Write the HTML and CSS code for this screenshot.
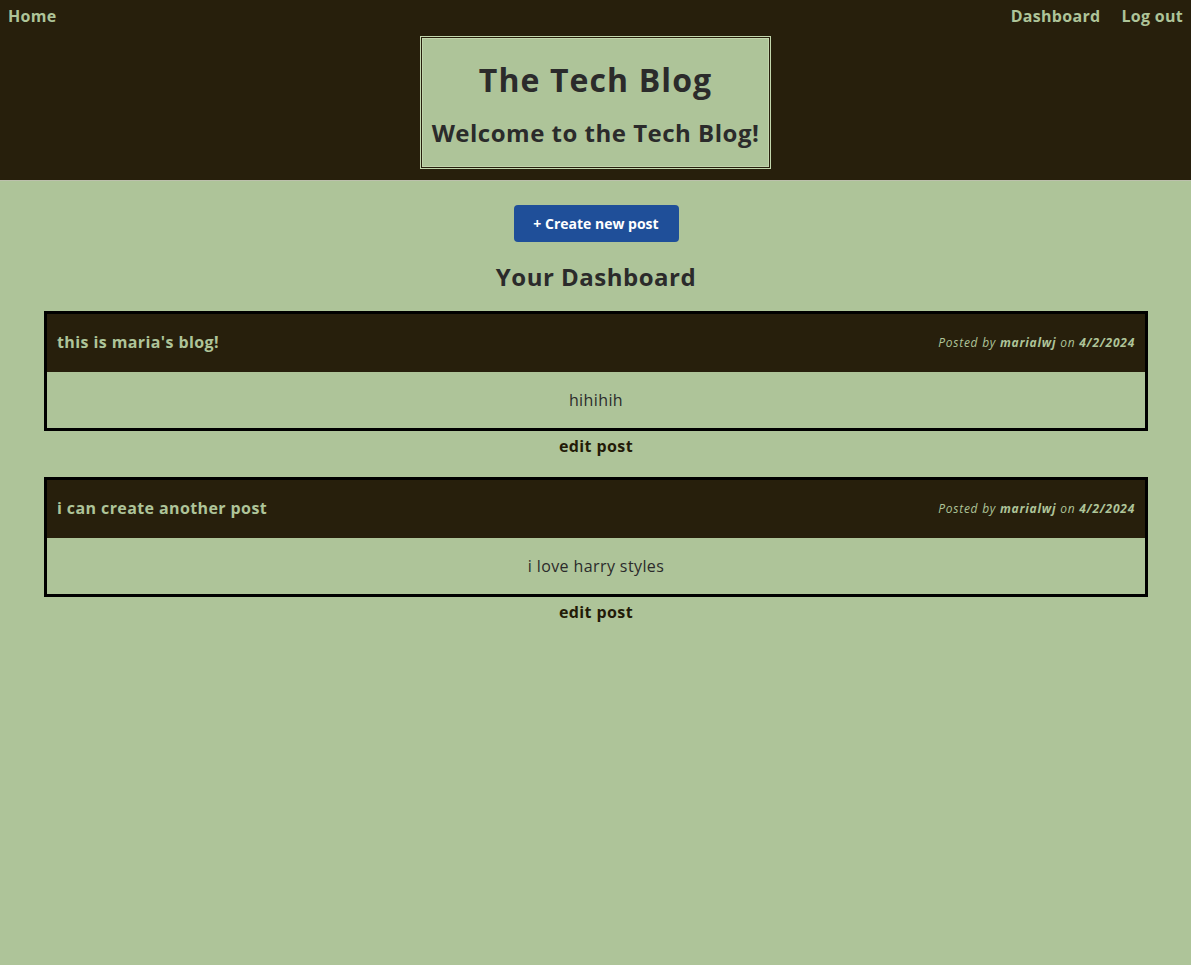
FILE: index.html
```html
<!DOCTYPE html>
<html lang="en">
<head>
<meta charset="utf-8">
<title>The Tech Blog</title>
<link rel="stylesheet" href="styles.css">
</head>
<body>
<header class="site-header">
  <nav class="nav">
    <a class="nav-link" href="#">Home</a>
    <div class="nav-right">
      <a class="nav-link" href="#">Dashboard</a>
      <a class="nav-link" href="#">Log out</a>
    </div>
  </nav>
  <div class="title-box">
    <h1 class="site-title">The Tech Blog</h1>
    <h2 class="site-subtitle">Welcome to the Tech Blog!</h2>
  </div>
</header>
<main class="main">
  <button class="btn-create">+ Create new post</button>
  <h2 class="page-title">Your Dashboard</h2>
  <section class="post">
    <div class="post-card">
      <div class="post-head">
        <span class="post-title">this is maria's blog!</span>
        <span class="post-meta">Posted by <b>marialwj</b> on <b>4/2/2024</b></span>
      </div>
      <div class="post-body">hihihih</div>
    </div>
    <a class="edit-link" href="#">edit post</a>
  </section>
  <section class="post">
    <div class="post-card">
      <div class="post-head">
        <span class="post-title">i can create another post</span>
        <span class="post-meta">Posted by <b>marialwj</b> on <b>4/2/2024</b></span>
      </div>
      <div class="post-body">i love harry styles</div>
    </div>
    <a class="edit-link" href="#">edit post</a>
  </section>
</main>
</body>
</html>
```
FILE: styles.css
```css
* { box-sizing: border-box; }
html, body {
  margin: 0;
  padding: 0;
  background: #aec499;
  font-family: "Open Sans", "DejaVu Sans", sans-serif;
  color: #2b2b2b;
  letter-spacing: 0.4px;
}
a { text-decoration: none; }

.site-header {
  background: #271f0c;
  border-bottom: 1px solid #bcc0ac;
  padding-bottom: 11px;
}
.nav {
  display: flex;
  justify-content: space-between;
  align-items: center;
  height: 32px;
  padding: 0 8px;
}
.nav-right {
  display: flex;
  gap: 21px;
}
.nav-link {
  color: #aec499;
  font-weight: 700;
  font-size: 16px;
  line-height: 20px;
  letter-spacing: 0.3px;
}
.title-box {
  width: 351px;
  margin: 4px auto 0;
  border: 3px double #c2d6ad;
  background: #aec499;
  background-clip: padding-box;
  text-align: center;
  padding: 21px 0 18px;
}
.site-title {
  margin: 0;
  font-size: 32px;
  line-height: 40px;
  font-weight: 700;
  color: #2b2b2b;
  letter-spacing: 1.1px;
}
.site-subtitle {
  margin: 18px 0 0;
  font-size: 24px;
  line-height: 30px;
  font-weight: 700;
  color: #2b2b2b;
  letter-spacing: 0.5px;
}

.main {
  display: flex;
  flex-direction: column;
  align-items: center;
  padding: 24px 43px 0 44px;
}
.btn-create {
  width: 165px;
  height: 37px;
  border: none;
  border-radius: 4px;
  background: #1f4f99;
  color: #ffffff;
  font-family: inherit;
  font-weight: 700;
  font-size: 14px;
  letter-spacing: 0;
}
.page-title {
  margin: 20px 0 19px;
  font-size: 24px;
  line-height: 30px;
  font-weight: 700;
  color: #2b2b2b;
  letter-spacing: 0.5px;
}
.post {
  width: 100%;
  display: flex;
  flex-direction: column;
  align-items: center;
  margin-bottom: 21px;
}
.post-card {
  width: 100%;
  border: 3px solid #000;
}
.post-head {
  display: flex;
  justify-content: space-between;
  align-items: center;
  height: 58px;
  padding: 0 10px 2px;
  background: #271f0c;
  color: #aec499;
}
.post-title {
  font-weight: 700;
  font-size: 16px;
}
.post-meta {
  font-style: italic;
  font-size: 12px;
  letter-spacing: 0.75px;
}
.post-body {
  height: 56px;
  display: flex;
  align-items: center;
  justify-content: center;
  font-size: 16px;
  color: #2b2b2b;
}
.edit-link {
  margin-top: 5px;
  font-weight: 700;
  font-size: 16px;
  line-height: 20px;
  color: #231b08;
}
```
